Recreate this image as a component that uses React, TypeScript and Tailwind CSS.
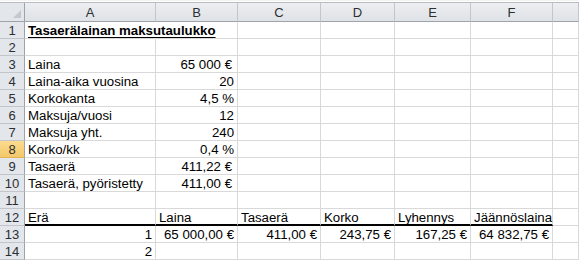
import React from "react";

type Cell = { v: string; align?: "l" | "r"; bold?: boolean; euro?: boolean };

const COLS = ["A", "B", "C", "D", "E", "F", ""];

const L = (v: string): Cell => ({ v, align: "l" });
const N = (v: string): Cell => ({ v, align: "r" });
const E = (v: string): Cell => ({ v, align: "r", euro: true });

const ROWS: (Cell | null)[][] = [
  [{ v: "Tasaerälainan maksutaulukko", align: "l", bold: true }],
  [],
  [L("Laina"), E("65 000 €")],
  [L("Laina-aika vuosina"), N("20")],
  [L("Korkokanta"), N("4,5 %")],
  [L("Maksuja/vuosi"), N("12")],
  [L("Maksuja yht."), N("240")],
  [L("Korko/kk"), N("0,4 %")],
  [L("Tasaerä"), E("411,22 €")],
  [L("Tasaerä, pyöristetty"), E("411,00 €")],
  [],
  [L("Erä"), L("Laina"), L("Tasaerä"), L("Korko"), L("Lyhennys"), L("Jäännöslaina")],
  [N("1"), N("65 000,00 €"), N("411,00 €"), N("243,75 €"), N("167,25 €"), N("64 832,75 €")],
  [N("2")],
];

export default function App() {
  return (
    <div
      className="w-[579px] h-[261px] overflow-hidden bg-white text-[13.25px] text-black"
      style={{ fontFamily: '"Liberation Sans", Arial, sans-serif' }}
    >
      {/* formula bar edge */}
      <div className="h-[3px] border-t border-b border-t-[#f4f4f4] border-b-[#b9bcc0] bg-white" />
      <div className="grid grid-cols-[25px_131px_82px_83px_74px_76px_82px_1fr]">
        {/* column headers */}
        <div className="h-[19px] border-r border-b border-[#9ea3a9] bg-[#e3e6ea] relative">
          <div className="absolute right-[3px] bottom-[3px] w-0 h-0 border-l-[8px] border-l-transparent border-b-[8px] border-b-[#c4c8cd]" />
        </div>
        {COLS.map((c, i) => (
          <div
            key={i}
            className="h-[19px] border-r border-b border-r-[#c2c6cb] border-b-[#9ea3a9] bg-gradient-to-b from-[#eceef1] to-[#dfe2e6] flex items-center justify-center text-[13px] text-[#2b2f33] leading-none"
          >
            {c}
          </div>
        ))}

        {ROWS.map((row, r) => (
          <React.Fragment key={r}>
            <div
              className={
                r === 7
                  ? "h-[17px] border-r border-b border-r-[#9ea3a9] border-b-[#e0b55a] bg-gradient-to-b from-[#fbdc8e] to-[#f3c86a] flex items-center justify-center text-[13px] leading-none text-[#2b2f33]"
                  : "h-[17px] border-r border-b border-r-[#9ea3a9] border-b-[#c2c6cb] bg-[#e3e6ea] flex items-center justify-center text-[13px] leading-none text-[#2b2f33]"
              }
            >
              {r + 1}
            </div>
            {COLS.map((_, c) => {
              const cell = row[c] || null;
              const thick = r === 11 && c < 6;
              const overflowTitle = r === 0 && c === 0;
              const left = cell?.align === "l";
              return (
                <div
                  key={c}
                  className={[
                    "h-[17px] border-r relative whitespace-nowrap leading-[17px]",
                    overflowTitle ? "border-r-transparent" : "border-r-[#d9d9d9]",
                    left ? "overflow-visible z-10 pl-[3px] text-left" : "overflow-hidden text-right",
                    thick ? "border-b-2 border-b-black" : "border-b border-b-[#d9d9d9]",
                    cell?.align === "r" ? (cell.euro ? "pr-[5px]" : "pr-[3px]") : "",
                  ].join(" ")}
                >
                  {cell && (
                    <span className={cell.bold ? "font-bold underline underline-offset-2" : ""}>{cell.v}</span>
                  )}
                </div>
              );
            })}
          </React.Fragment>
        ))}
      </div>
    </div>
  );
}
